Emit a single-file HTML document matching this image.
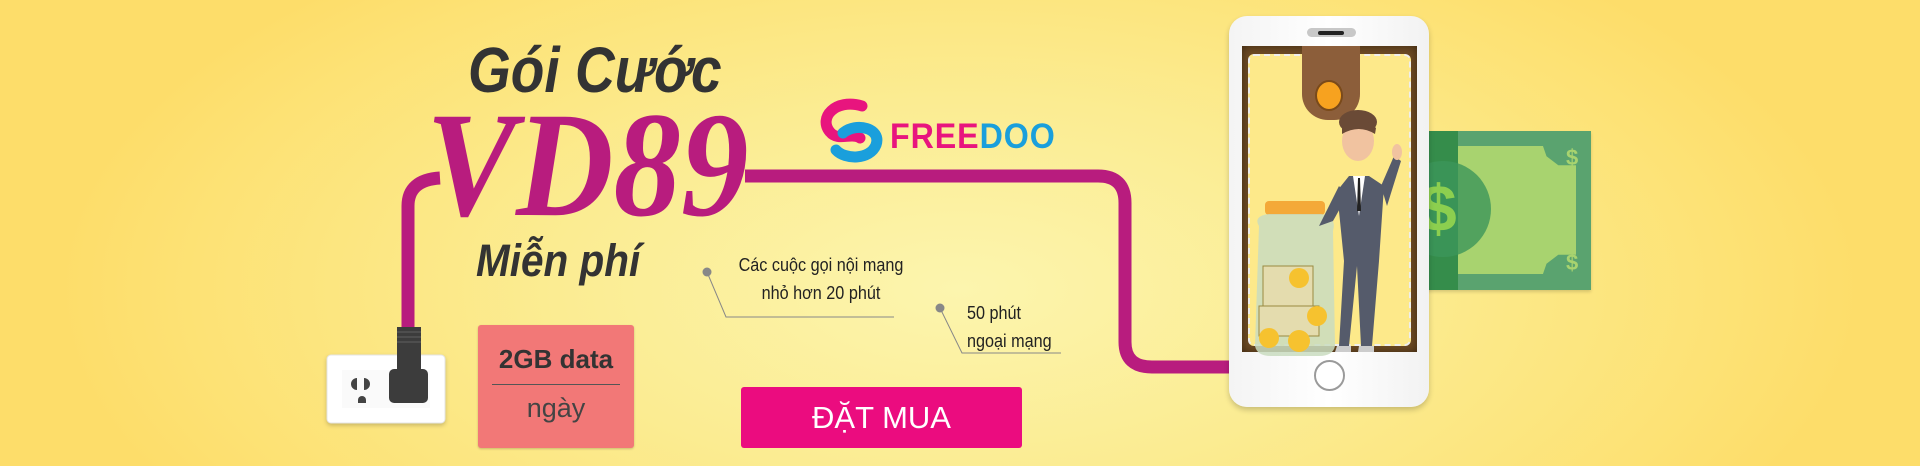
<!DOCTYPE html>
<html><head><meta charset="utf-8"><style>
html,body{margin:0;padding:0}
body{width:1920px;height:466px;overflow:hidden;position:relative;font-family:"Liberation Sans",sans-serif;
background:radial-gradient(ellipse 900px 420px at 50% 62%,#fcf5ae 0%,#fbec92 45%,#fde275 85%,#fddd6a 100%);}
.a{position:absolute;white-space:nowrap;line-height:1}
</style></head><body>
<svg class="a" style="left:0;top:0" width="1920" height="466">
  <path d="M408 330 L408 206 Q408 180 440 178 M745 176 L1098 176 Q1125 176 1125 203 L1125 342 Q1125 367 1152 367 L1240 367" fill="none" stroke="#b81c7e" stroke-width="13"/>
  <circle cx="707" cy="272" r="4.5" fill="#888"/>
  <path d="M707 272 L726 317 L894 317" fill="none" stroke="#888" stroke-width="1"/>
  <circle cx="940" cy="308" r="4.5" fill="#888"/>
  <path d="M940 308 L962 353 L1061 353" fill="none" stroke="#888" stroke-width="1"/>
  <rect x="327" y="355" width="118" height="68" rx="4" fill="#fff" stroke="#e5e5e5" style="filter:drop-shadow(0 2px 2px rgba(0,0,0,.2))"/>
  <rect x="342" y="370" width="88" height="38" fill="#fafafa"/>
  <path d="M357 378 a6 6 0 0 0 0 12 z M364 378 a6 6 0 0 1 0 12 z" fill="#444"/>
  <path d="M358 400 a4 4 0 0 1 8 0 v3 h-8z" fill="#444"/>
  <rect x="397" y="327" width="24" height="43" fill="#3c3c3c"/>
  <path d="M397 332h24M397 337h24M397 342h24" stroke="#555" stroke-width="1.5"/>
  <rect x="389" y="369" width="39" height="34" rx="5" fill="#3c3c3c"/>
  <path d="M862 106 C835 98 818 118 830 132 C838 142 852 132 860 138" fill="none" stroke="#e8157e" stroke-width="11" stroke-linecap="round"/>
  <path d="M843 133 C856 122 882 128 876 145 C870 160 845 160 836 150" fill="none" stroke="#1a9fdc" stroke-width="11" stroke-linecap="round"/>
</svg>
<div class="a" style="left:890px;top:119px;font-size:35px;font-weight:bold;letter-spacing:1px;transform:scaleX(.92);transform-origin:left"><span style="color:#e8157e">FREE</span><span style="color:#1a9fdc">DOO</span></div>

<div class="a" style="left:468px;top:38px;font-size:64px;font-weight:bold;font-style:italic;color:#333;transform:scaleX(.86);transform-origin:left">Gói Cước</div>
<div class="a" style="left:426px;top:90px;font-size:150px;font-weight:bold;font-style:italic;font-family:'Liberation Serif',serif;color:#b81c7e;transform:scaleX(.9);transform-origin:left">VD89</div>
<div class="a" style="left:476px;top:238px;font-size:45px;font-weight:bold;font-style:italic;color:#333;transform:scaleX(.9);transform-origin:left">Miễn phí</div>

<div class="a" style="left:721px;top:251px;font-size:18px;color:#222;width:200px;text-align:center;line-height:28px;white-space:normal;transform:scaleX(.9);transform-origin:center">Các cuộc gọi nội mạng<br>nhỏ hơn 20 phút</div>
<div class="a" style="left:967px;top:299px;font-size:18px;color:#222;line-height:28px;transform:scaleX(.9);transform-origin:left">50 phút<br>ngoại mạng</div>

<div class="a" style="left:478px;top:325px;width:156px;height:123px;background:#f27877;border-radius:3px;box-shadow:0 1px 2px rgba(0,0,0,.2)">
  <div class="a" style="left:0;width:156px;top:21px;text-align:center;font-size:26px;font-weight:bold;color:#333">2GB data</div>
  <div class="a" style="left:14px;width:128px;top:59px;height:1px;background:#555"></div>
  <div class="a" style="left:0;width:156px;top:70px;text-align:center;font-size:27px;color:#444">ngày</div>
</div>
<div class="a" style="left:741px;top:387px;width:281px;height:61px;background:#eb0c7f;border-radius:3px;color:#fff;font-size:31px;text-align:center;line-height:61px">ĐẶT MUA</div>

<div class="a" style="left:1410px;top:131px;width:181px;height:159px;background:#5aa36f;box-shadow:0 2px 3px rgba(0,0,0,.15)">
  <div class="a" style="left:48px;top:15px;width:118px;height:128px;background:#a8d36f;clip-path:polygon(0 0,72% 0,75% 8%,85% 15%,100% 15%,100% 85%,85% 85%,75% 92%,72% 100%,0 100%)"></div>
  <div class="a" style="left:0;top:0;width:48px;height:159px;background:#2f8a45;opacity:.85"></div>
  <div class="a" style="left:-15px;top:30px;width:96px;height:96px;border-radius:50%;background:rgba(60,150,90,.8)"></div>
  <div class="a" style="left:10px;top:44px;font-size:66px;font-weight:bold;color:#8ccf4f">$</div>
  <div class="a" style="left:156px;top:16px;font-size:22px;font-weight:bold;color:#a8d36f">$</div>
  <div class="a" style="left:156px;top:121px;font-size:22px;font-weight:bold;color:#a8d36f">$</div>
</div>

<div class="a" style="left:1229px;top:16px;width:200px;height:391px;background:linear-gradient(90deg,#f4f4f4,#fff 50%,#f2f2f2);border-radius:18px;box-shadow:0 3px 6px rgba(0,0,0,.2)">
  <div class="a" style="left:78px;top:12px;width:49px;height:9px;background:#c8c8c8;border-radius:5px"></div>
  <div class="a" style="left:89px;top:15px;width:26px;height:4px;background:#222;border-radius:2px"></div>
  <div class="a" style="left:13px;top:30px;width:175px;height:306px;background:#6e4c26;box-shadow:inset 0 0 10px #3d2810">
    <div class="a" style="left:6px;top:8px;width:163px;height:292px;background:#fde98a;border-radius:6px;border:2px dashed #eee;box-sizing:border-box"></div>
  </div>
  <div class="a" style="left:73px;top:30px;width:58px;height:74px;background:#8c5e3a;border-radius:0 0 26px 26px"></div>
  <div class="a" style="left:86px;top:64px;width:24px;height:27px;border-radius:50%;background:#f7a21f;border:2px solid #7a4a1a"></div>
  <svg class="a" style="left:0;top:0" width="200" height="391">
    <rect x="36" y="185" width="60" height="14" rx="4" fill="#f4a938"/>
    <path d="M30 210 Q24 200 40 198 L92 198 Q108 200 104 215 L106 330 Q104 340 90 340 L42 340 Q28 340 26 330 Z" fill="#c9dcc0" opacity=".85"/>
    <rect x="34" y="250" width="50" height="40" fill="#e4dcae" stroke="#9a8a40"/>
    <rect x="30" y="290" width="60" height="30" fill="#e4dcae" stroke="#9a8a40"/>
    <circle cx="40" cy="322" r="10" fill="#f6c22f"/><circle cx="70" cy="325" r="11" fill="#f6c22f"/><circle cx="88" cy="300" r="10" fill="#f6c22f"/><circle cx="70" cy="262" r="10" fill="#f6c22f"/>
    <ellipse cx="129" cy="106" rx="19" ry="12" fill="#6a4a36"/>
    <ellipse cx="129" cy="125" rx="16" ry="20" fill="#f1c3a0"/>
    <path d="M113 112 Q128 95 147 112 L146 118 Q130 108 113 118Z" fill="#6a4a36"/>
    <path d="M108 175 L120 160 L140 160 L155 170 L150 245 L143 330 L132 330 L128 250 L120 330 L110 330 L115 245 Z" fill="#555b6b"/>
    <path d="M90 210 L110 170 L118 180 L104 205 Z" fill="#555b6b"/>
    <path d="M152 170 L165 140 L172 145 L158 190 Z" fill="#555b6b"/>
    <path d="M124 160 L136 160 L130 200Z" fill="#fff"/><path d="M129 162 L131 162 L132 195 L128 195Z" fill="#222"/>
    <ellipse cx="168" cy="136" rx="5" ry="8" fill="#f1c3a0"/>
    <path d="M108 330 h14 v6 h-16z M130 330 h15 v6 h-16z" fill="#ccc"/>
  </svg>
  <div class="a" style="left:85px;top:344px;width:31px;height:31px;border-radius:50%;border:2px solid #9a9a9a;box-sizing:border-box;background:#fff"></div>
</div>
</body></html>
